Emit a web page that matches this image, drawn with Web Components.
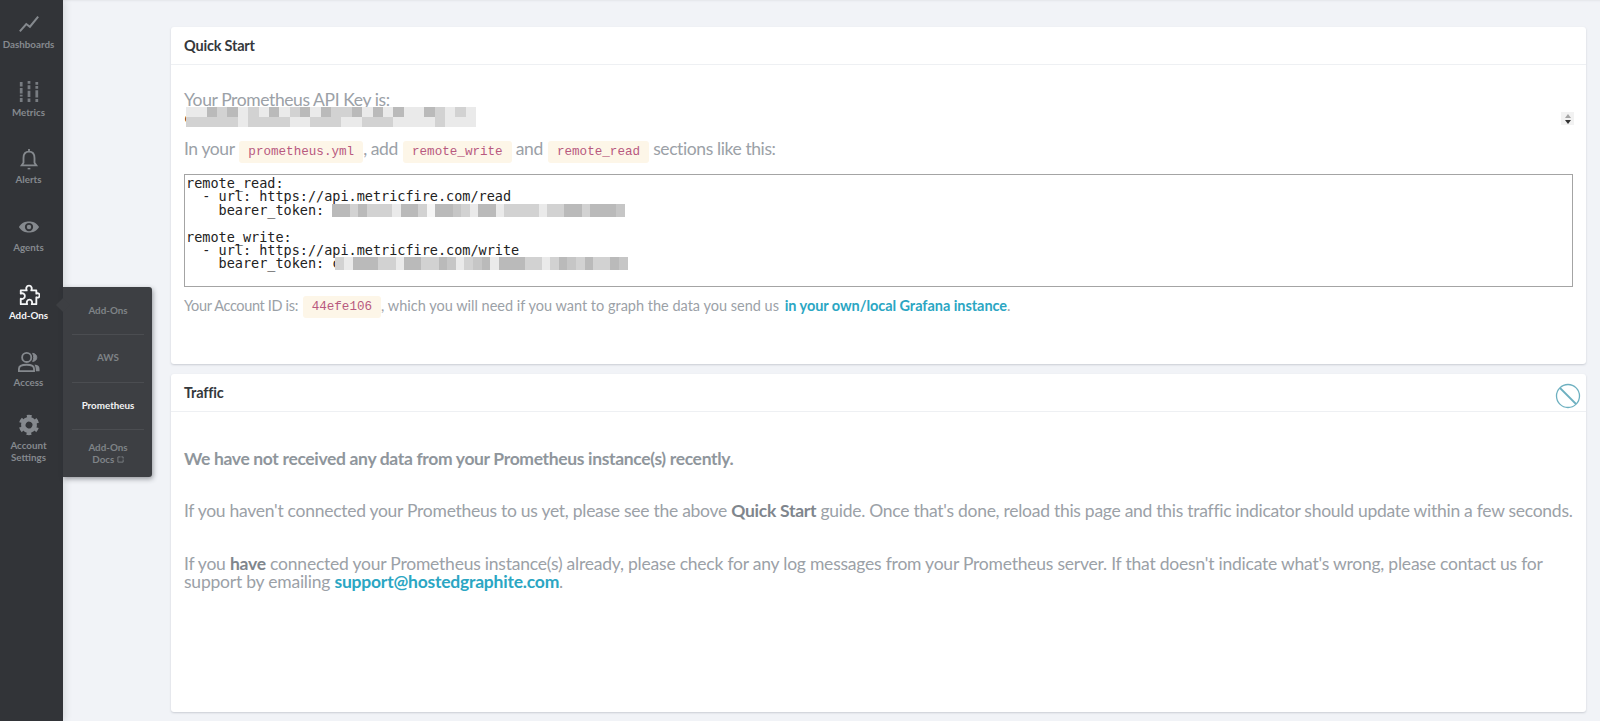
<!DOCTYPE html>
<html>
<head>
<meta charset="utf-8">
<title>Prometheus Add-On</title>
<style>
  html, body { margin: 0; height: 100%; background: #f1f3f7; overflow: hidden; }
  body { font-family: Lato, "Noto Sans", sans-serif; color: #9ba1a7; }
</style>
</head>
<body>
<app-shell>
  <side-bar slot="nav">
    <nav-item label="Dashboards"><svg viewBox="0 0 24 24" fill="none" stroke="currentColor" stroke-width="2.2"><path d="M2 20 L9 12 L13 15 L22 4"/></svg></nav-item>
    <nav-item label="Metrics"><svg viewBox="0 0 24 24" fill="none" stroke="currentColor" stroke-width="3" opacity=".85"><path d="M3.500 1v5M3.500 7.500v6M3.500 15v2M3.500 18.500v4.500M12 0v3M12 4.500v4.500M12 10.500v7M12 19v4M20.500 1v3M20.500 5.500v3M20.500 10v8M20.500 19.500v3.500"/></svg></nav-item>
    <nav-item label="Alerts"><svg viewBox="0 0 24 24" fill="none" stroke="currentColor" stroke-width="2"><path d="M12 1v3M12 4c-4 0-6 3-6 7v5l-2 3h16l-2-3v-5c0-4-2-7-6-7z"/><path d="M10.500 22.500h3" stroke-width="1.600"/></svg></nav-item>
    <nav-item label="Agents"><svg viewBox="0 0 24 24"><path fill="currentColor" fill-rule="evenodd" d="M1 12C4 7 8 6 12 6s8 1 11 6c-3 5-7 6-11 6s-8-1-11-6zm11-4.500a4.500 4.500 0 1 0 0 9 4.500 4.500 0 0 0 0-9z"/><circle cx="12" cy="12" r="2.400" fill="currentColor"/></svg></nav-item>
    <nav-item label="Add-Ons" active><svg viewBox="0 0 24 24" fill="none" stroke="currentColor" stroke-width="2" stroke-linejoin="round"><path d="M3 7H9.500C8.500 5 9 1.800 12 1.800S15.500 5 14.500 7H20V10.500C22 9.500 23.500 10.500 23.500 12.500S22 15.500 20 14.500V22H15C16 19.500 15 17 12.500 17S9 19.500 10 22H3V16C5 17 7.500 15.500 7.500 13S5 9.500 3 10.500Z"/></svg></nav-item>
    <nav-item label="Access"><svg viewBox="0 0 24 24" fill="none" stroke="currentColor" stroke-width="2"><circle cx="9.500" cy="7" r="5"/><path d="M1 22v-2.500c0-3 3.500-4.500 8.500-4.500s8 1.500 8 4.500V22z"/><path d="M16 2.500c3 .4 4.500 2.300 4.500 4.500s-1.500 4-4.500 4.500c1.500-2.800 1.500-6.200 0-9z" fill="currentColor" stroke-width="1"/><path d="M19.500 15c2.500.5 4 2 4 4.500V22H19.500c0-2.500-.2-5-1.500-7z" fill="currentColor" stroke="none"/></svg></nav-item>
    <nav-item label="Account Settings" tight><svg viewBox="0 0 24 24" fill="none" stroke="currentColor" transform="rotate(30)"><circle cx="12" cy="12" r="6.200" stroke-width="5"/><circle cx="12" cy="12" r="9.500" stroke-width="3.200" stroke-dasharray="5 4.950" stroke-dashoffset="2.500"/></svg></nav-item>
    <nav-flyout>
      <flyout-item>Add-Ons</flyout-item>
      <flyout-item>AWS</flyout-item>
      <flyout-item active>Prometheus</flyout-item>
      <flyout-item>Add-Ons<br>Docs <svg width="7" height="7" viewBox="0 0 8 8" fill="none" stroke="currentColor"><path d="M4 1H1v6h6V4M5 1h2v2"/></svg></flyout-item>
    </nav-flyout>
  </side-bar>

  <info-card heading="Quick Start" style="height:337px">
    <text-row size="17.500" top="26">Your Prometheus API Key is:</text-row>
    <key-field></key-field>
    <text-row size="17.500" top="13" tall="16">In your <code-chip>prometheus.yml</code-chip>, add <code-chip>remote_write</code-chip> and <code-chip>remote_read</code-chip> sections like this:</text-row>
    <config-box>
      <pre-line>remote_read:</pre-line>
      <pre-line>  - url: https://api.metricfire.com/read</pre-line>
      <pre-line>    bearer_token: <blur-mask cells="3353555733583345733755557553353334" w="292" skip="0"></blur-mask></pre-line>
      <pre-line> </pre-line>
      <pre-line>remote_write:</pre-line>
      <pre-line>  - url: https://api.metricfire.com/write</pre-line>
      <pre-line>    bearer_token: c<blur-mask cells="5733355733553475437333557534535534" w="292" skip="-5"></blur-mask></pre-line>
    </config-box>
    <text-row size="14.500" top="9" tall="20" style="letter-spacing:0"><span style="letter-spacing:-.35px">Your Account ID is:</span> <code-chip>44efe106</code-chip>, which you will need if you want to graph the data you send us <link-text style="letter-spacing:-.05px;margin-left:2px">in your own/local Grafana instance</link-text>.</text-row>
  </info-card>

  <info-card heading="Traffic" style="height:338px">
    <svg slot="action" width="26" height="26" viewBox="0 0 26 26" fill="none" stroke="#6db0c0" stroke-width="1.300" style="margin:7px 1px 0 0"><circle cx="13" cy="13" r="11.500"/><path d="M5 5l16 16" stroke-width="1.800"/></svg>
    <text-row size="17.500" top="38" style="font-weight:700;color:#8f969c;letter-spacing:-.34px">We have not received any data from your Prometheus instance(s) recently.</text-row>
    <text-row size="17.500" top="34" style="letter-spacing:-.27px">If you haven't connected your Prometheus to us yet, please see the above <b>Quick Start</b> guide. Once that's done, reload this page and this traffic indicator should update within a few seconds.</text-row>
    <text-row size="17.500" top="35" style="letter-spacing:-.22px">If you <b>have</b> connected your Prometheus instance(s) already, please check for any log messages from your Prometheus server. If that doesn't indicate what's wrong, please contact us for support by emailing <link-text>support@hostedgraphite.com</link-text>.</text-row>
  </info-card>
</app-shell>

<script>
// small helper so every element below only has to hand over its markup
class ShadowEl extends HTMLElement {
  constructor() {
    super();
    this.attachShadow({ mode: "open" });
  }
  render(css, html) {
    this.shadowRoot.innerHTML = `<style>${css}</style>${html}`;
  }
}

class AppShell extends ShadowEl {
  connectedCallback() {
    this.render(`
      :host { display: flex; height: 721px; }
      main { flex: 1; min-width: 0; display: flex; flex-direction: column; gap: 10px; padding: 27px 14px 0 108px; box-shadow: inset 0 3px 2px -2px #e3e5ea; }
    `, `<slot name="nav"></slot><main><slot></slot></main>`);
  }
}

class SideBar extends ShadowEl {
  connectedCallback() {
    this.render(`
      :host { display: flex; flex-direction: column; flex: none; width: 63px; background: #323438; position: relative; z-index: 2; box-shadow: 2px 0 7px rgba(60,64,72,.14); }
    `, `<slot></slot>`);
  }
}

class NavItem extends ShadowEl {
  connectedCallback() {
    const label = this.getAttribute("label");
    this.render(`
      :host { display: flex; flex-direction: column; align-items: center; height: 67.7px; box-sizing: border-box; padding: 13px 6px 0 0; color: #85898e; font: 700 9.800px/11.500px Lato, "Noto Sans", sans-serif; text-align: center; }
      :host([active]) { color: #f4f5f6; }
      :host([tight]) { padding-top: 8px; }
      .icon { width: 22px; height: 22px; margin-bottom: 4px; }
      ::slotted(svg) { width: 22px; height: 22px; display: block; }
    `, `<div class="icon"><slot></slot></div><div>${label}</div>`);
  }
}

class NavFlyout extends ShadowEl {
  connectedCallback() {
    this.render(`
      :host { position: absolute; left: 63px; top: 287px; width: 89px; height: 190px; box-sizing: border-box; padding: 0 8px 0 9px; display: flex; flex-direction: column; background: #3d3f43; border-radius: 0 3px 3px 0; box-shadow: 1px 2px 5px rgba(40,42,48,.45); }
      i { position: absolute; left: -5px; top: 13px; width: 10px; height: 10px; background: #3d3f43; transform: rotate(45deg); }
    `, `<i></i><slot></slot>`);
  }
}

class FlyoutItem extends ShadowEl {
  connectedCallback() {
    this.render(`
      :host { flex: 1; display: flex; align-items: center; justify-content: center; text-align: center; border-top: 1px solid #4b4d51; color: #7f8387; font: 700 9.800px/11.500px Lato, "Noto Sans", sans-serif; }
      :host(:first-of-type) { border-top: 0; }
      :host([active]) { color: #f2f3f4; }
    `, `<div><slot></slot></div>`);
  }
}

class InfoCard extends ShadowEl {
  connectedCallback() {
    this.render(`
      :host { display: block; box-sizing: border-box; flex: none; background: #fff; border-radius: 3px; box-shadow: 0 1px 2px rgba(90,95,110,.25); }
      header { height: 38px; box-sizing: border-box; padding: 0 4px 0 13px; display: flex; align-items: center; justify-content: space-between; border-bottom: 1px solid #eef0f3; color: #35383c; font: 700 14.500px Lato, "Noto Sans", sans-serif; letter-spacing: -.2px; }
      section { padding: 0 13px; }
    `, `<header><span>${this.getAttribute("heading")}</span><slot name="action"></slot></header><section><slot></slot></section>`);
  }
}

class TextRow extends ShadowEl {
  connectedCallback() {
    const size = this.getAttribute("size") || 18;
    const top = this.getAttribute("top") || 0;
    const lh = this.getAttribute("tall") || 18;
    this.render(`
      :host { display: block; margin-top: ${top}px; font-size: ${size}px; line-height: ${lh}px; color: #9ba1a7; letter-spacing: -.4px; }
      ::slotted(b) { color: #7f868d; font-weight: 700; }
    `, `<slot></slot>`);
  }
}

class CodeChip extends ShadowEl {
  connectedCallback() {
    this.render(`
      :host { display: inline-block; height: 22px; padding: 0 9px; margin: 0 0 0 1px; vertical-align: top; background: #fdf6e8; border-radius: 3px; color: #b8597f; font: 12.600px/23px "Liberation Mono", monospace; letter-spacing: 0; }
    `, `<slot></slot>`);
  }
}

class LinkText extends ShadowEl {
  connectedCallback() {
    this.render(`:host { color: #2ba6c3; font-weight: 700; }`, `<slot></slot>`);
  }
}

// the field with the API key: hidden value behind a mosaic, spin arrows at the right
class KeyField extends ShadowEl {
  connectedCallback() {
    this.render(`
      :host { display: flex; align-items: flex-start; justify-content: space-between; height: 21px; margin-top: -2px; position: relative; }
      .arrows { margin: 5px -1px 0 0; width: 13px; height: 13px; background: #f2f2f2; display: flex; flex-direction: column; align-items: center; justify-content: center; gap: 2px; }
      .up, .down { width: 0; height: 0; border: 3px solid transparent; }
      .up { border-top: 0; border-bottom: 4px solid #a5a5a5; }
      .down { border-bottom: 0; border-top: 4px solid #333; }
      .value { display: flex; color: #222; font: 13.333px/23px "DejaVu Sans Mono", monospace; }
      .mask { margin-left: -6px; display: flex; flex-direction: column; }
    `, `<div class="value">c<div class="mask"><blur-mask cells="7735375737537355373737735757" w="290" h="10"></blur-mask><blur-mask cells="5555575555775557755577775777" w="290" h="10"></blur-mask></div></div><div class="arrows"><div class="up"></div><div class="down"></div></div>`);
  }
}

class ConfigBox extends ShadowEl {
  connectedCallback() {
    this.render(`
      :host { display: block; box-sizing: border-box; height: 113px; margin-top: 11px; padding: 2px 1px; border: 1px solid #a4a4a4; background: #fff; overflow: hidden; }
    `, `<slot></slot>`);
  }
}

class PreLine extends ShadowEl {
  connectedCallback() {
    this.render(`
      :host { display: block; height: 13.400px; font: 13.500px/13.400px "DejaVu Sans Mono", monospace; color: #222; white-space: pre; }
    `, `<slot></slot>`);
  }
}

// greyed out secret: one row of soft cells, each digit in "cells" is a lightness step
class BlurMask extends ShadowEl {
  connectedCallback() {
    const w = this.getAttribute("w");
    const h = this.getAttribute("h") || 13;
    const skip = this.getAttribute("skip") || 0;
    const cells = [...this.getAttribute("cells")].map(d => {
      const g = 150 + d * 12;
      return `<i style="background:rgb(${g},${g},${g})"></i>`;
    }).join("");
    this.render(`
      :host { display: inline-flex; width: ${w}px; height: ${h}px; margin-left: ${skip}px; vertical-align: top; filter: blur(.6px); }
      i { flex: 1; }
    `, cells);
  }
}

customElements.define("app-shell", AppShell);
customElements.define("side-bar", SideBar);
customElements.define("nav-item", NavItem);
customElements.define("nav-flyout", NavFlyout);
customElements.define("flyout-item", FlyoutItem);
customElements.define("info-card", InfoCard);
customElements.define("text-row", TextRow);
customElements.define("code-chip", CodeChip);
customElements.define("link-text", LinkText);
customElements.define("key-field", KeyField);
customElements.define("config-box", ConfigBox);
customElements.define("pre-line", PreLine);
customElements.define("blur-mask", BlurMask);
</script>
</body>
</html>
